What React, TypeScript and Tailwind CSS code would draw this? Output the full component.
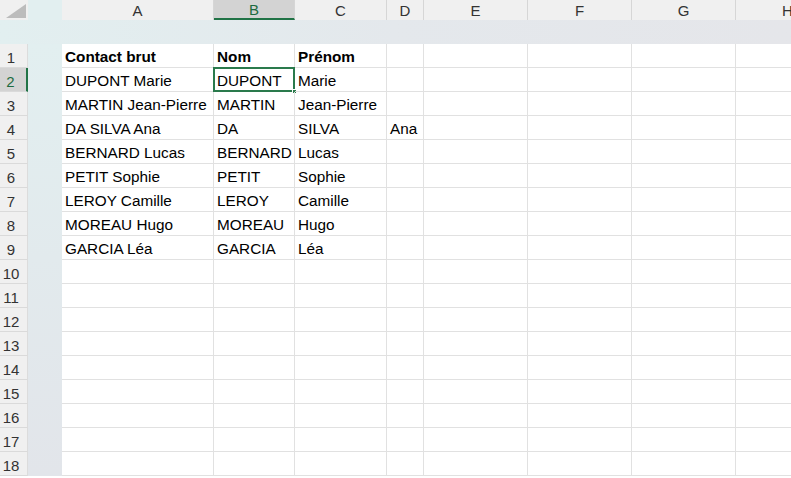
import React from 'react';

const cols = [
  { key: 'A', w: 152 },
  { key: 'B', w: 81 },
  { key: 'C', w: 92 },
  { key: 'D', w: 37 },
  { key: 'E', w: 104 },
  { key: 'F', w: 104 },
  { key: 'G', w: 104 },
  { key: 'H', w: 104 },
];

const rows: string[][] = [
  ['Contact brut', 'Nom', 'Prénom'],
  ['DUPONT Marie', 'DUPONT', 'Marie'],
  ['MARTIN Jean-Pierre', 'MARTIN', 'Jean-Pierre'],
  ['DA SILVA Ana', 'DA', 'SILVA', 'Ana'],
  ['BERNARD Lucas', 'BERNARD', 'Lucas'],
  ['PETIT Sophie', 'PETIT', 'Sophie'],
  ['LEROY Camille', 'LEROY', 'Camille'],
  ['MOREAU Hugo', 'MOREAU', 'Hugo'],
  ['GARCIA Léa', 'GARCIA', 'Léa'],
];

export default function App() {
  const allRows = Array.from({ length: 18 }, (_, i) => rows[i] || []);

  return (
    <div
      className="w-[791px] h-[478px] overflow-hidden bg-white text-[15.3px] text-black flex flex-col"
      style={{ fontFamily: '"Liberation Sans", Arial, sans-serif' }}
    >
      {/* column headers */}
      <div className="flex h-[20px] shrink-0">
        <div className="w-[28px] shrink-0 bg-[#f0f0f0] relative">
          <div className="absolute right-[2px] bottom-[2px] w-0 h-0 border-l-[20px] border-l-transparent border-b-[14px] border-b-[#bcbcbc]" />
        </div>
        <div className="w-[34px] shrink-0 bg-[#e2eff0]" />
        {cols.map((c) => {
          const active = c.key === 'B';
          return (
            <div
              key={c.key}
              style={{ width: c.w }}
              className={
                'shrink-0 flex items-center justify-center leading-none text-[15px] border-r border-[#d6d6d6] ' +
                (active
                  ? 'bg-[#d3d3d3] text-[#1d6b40] border-b-2 border-b-[#217346]'
                  : 'bg-[#f0f0f0] text-[#333]')
              }
            >
              {c.key}
            </div>
          );
        })}
      </div>

      {/* band */}
      <div className="h-[24px] shrink-0 bg-gradient-to-r from-[#e2eff0] via-[#e4e8ec] to-[#e5e6ea]" />

      {/* grid rows */}
      <div className="flex">
        <div className="w-[28px] shrink-0 flex flex-col">
          {allRows.map((_, i) => {
            const active = i === 1;
            return (
              <div
                key={i}
                className={
                  'h-[24px] shrink-0 flex items-center justify-center pr-[5px] pt-[5px] text-[15px] border-b border-[#dadada] ' +
                  (active
                    ? 'bg-[#d3d3d3] text-[#1d6b40] border-r-2 border-r-[#217346]'
                    : 'bg-[#f0f0f0] text-[#333] border-r border-r-[#dcdcdc]')
                }
              >
                {i + 1}
              </div>
            );
          })}
        </div>
        <div className="w-[34px] shrink-0 bg-gradient-to-b from-[#e2eff0] to-[#e2e5ea]" />
        <div className="flex flex-col">
          {allRows.map((r, i) => (
            <div key={i} className="flex h-[24px] shrink-0">
              {cols.map((c, j) => {
                const text = r[j];
                const active = i === 1 && j === 1;
                return (
                  <div
                    key={c.key}
                    style={{ width: c.w }}
                    className={
                      'relative shrink-0 flex items-end leading-[20px] pl-[3px] whitespace-nowrap border-r border-b border-[#e1e1e1] ' +
                      (i === 0 ? 'font-bold' : '')
                    }
                  >
                    {text}
                    {active && (
                      <>
                        <div className="absolute -left-px -top-px right-[-1px] bottom-[-1px] border-2 border-[#2a7a4c]" />
                        <div className="absolute right-[-3px] bottom-[-3px] w-[5px] h-[5px] bg-[#2a7a4c] border border-white" />
                      </>
                    )}
                  </div>
                );
              })}
            </div>
          ))}
        </div>
      </div>
    </div>
  );
}
